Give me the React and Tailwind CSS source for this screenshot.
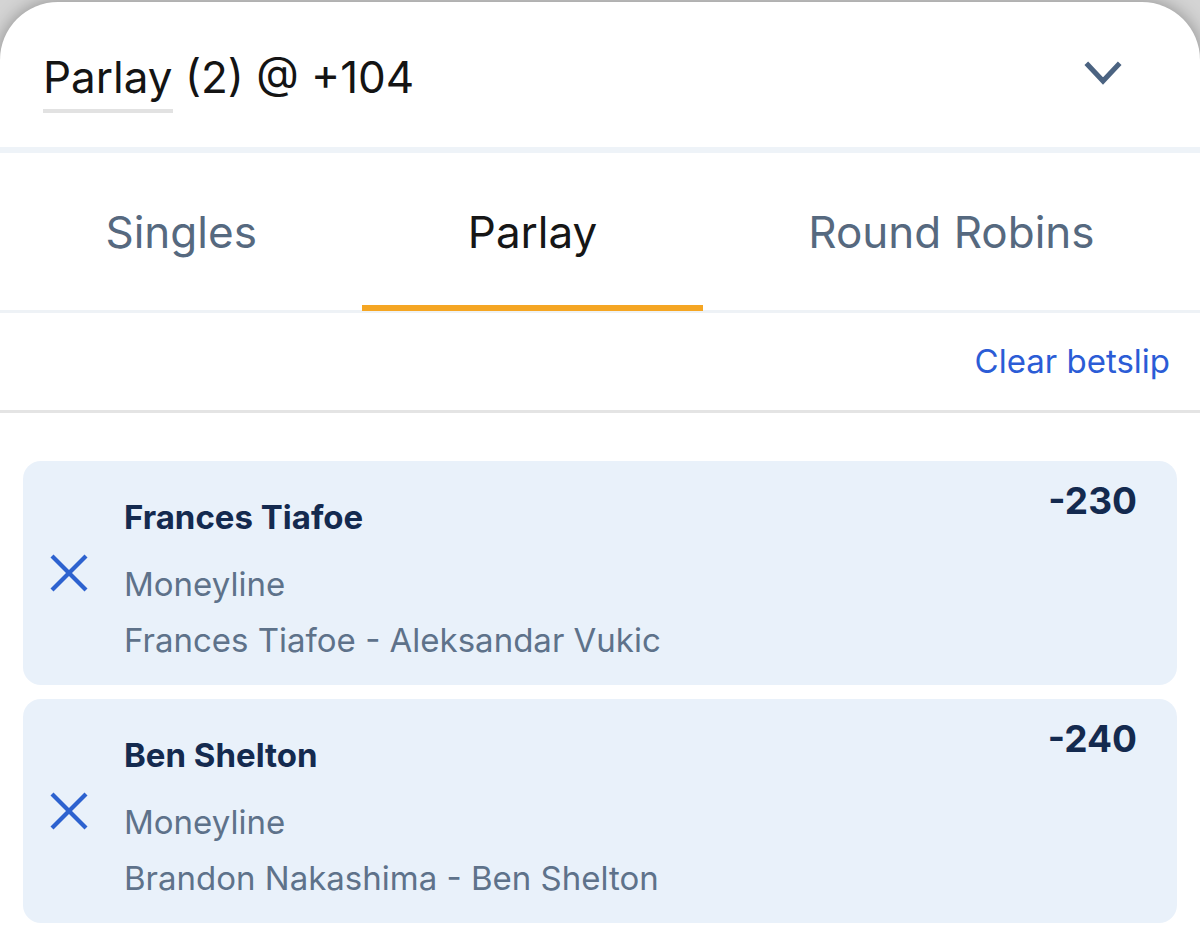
import React from "react";

function Chevron() {
  return (
    <svg width="42" height="32" viewBox="0 0 42 32" fill="none">
      <polyline points="6,6 21,22 36,6" stroke="#4b6381" strokeWidth="5" strokeLinecap="square" strokeLinejoin="miter" />
    </svg>
  );
}

function XIcon() {
  return (
    <svg width="40" height="40" viewBox="0 0 40 40" fill="none">
      <line x1="3" y1="3" x2="37" y2="37" stroke="#2d62cf" strokeWidth="4.2" />
      <line x1="37" y1="3" x2="3" y2="37" stroke="#2d62cf" strokeWidth="4.2" />
    </svg>
  );
}

function Leg({ name, market, match, odds }) {
  return (
    <div className="flex h-[224px] rounded-[18px] bg-[#e9f1fa]">
      <div className="flex w-[101px] shrink-0 items-center pl-[26px]">
        <XIcon />
      </div>
      <div className="flex flex-1 flex-col pt-[36px]">
        <div className="text-[33px] font-bold leading-[40px] text-[#142a4f]">{name}</div>
        <div className="mt-[27px] text-[33px] leading-[40px] text-[#5e728a]">{market}</div>
        <div className="mt-[16px] text-[33px] leading-[40px] text-[#5e728a]">{match}</div>
      </div>
      <div className="pr-[40px] pt-[18px] text-[37px] font-bold leading-[44px] text-[#142a4f]">{odds}</div>
    </div>
  );
}

export default function App() {
  return (
    <div
      className="min-h-[932px] w-[1200px] overflow-hidden bg-[#d4d4d4] pt-[2px]"
      style={{ fontFamily: "Inter, 'Noto Sans', sans-serif" }}
    >
      <div className="min-h-[930px] rounded-t-[58px] bg-white shadow-[0_0_18px_rgba(0,0,0,0.35)]">
        {/* header */}
        <div className="flex h-[145px] items-center justify-between pl-[43px] pr-[76px]">
          <div className="relative mt-[4px] text-[44px] leading-[56px] text-[#141414]">
            <span className="relative inline-block">
              Parlay
              <span className="absolute left-0 right-0 top-[60px] h-[4px] bg-[#e2e2e2]"></span>
            </span>{" "}
            (2) @ +104
          </div>
          <Chevron />
        </div>
        <div className="h-[6px] bg-[#eef3f8]"></div>

        {/* tabs */}
        <div className="flex h-[160px] border-b-[3px] border-[#eef2f6]">
          <div className="flex flex-auto items-center justify-center text-[44px] text-[#56697f]">Singles</div>
          <div className="relative flex flex-auto items-center justify-center text-[44px] text-[#161616]">
            Parlay
            <span className="absolute bottom-[-1px] left-0 right-0 h-[6px] bg-[#f5a623]"></span>
          </div>
          <div className="flex flex-auto items-center justify-center text-[44px] text-[#56697f]">Round Robins</div>
        </div>

        {/* clear */}
        <div className="flex h-[100px] items-center justify-end border-b-[3px] border-[#e4e4e4] pr-[30px]">
          <span className="text-[33px] text-[#2b5cd6]">Clear betslip</span>
        </div>

        {/* legs */}
        <div className="flex flex-col gap-[14px] px-[23px] pt-[48px]">
          <Leg
            name="Frances Tiafoe"
            market="Moneyline"
            match="Frances Tiafoe - Aleksandar Vukic"
            odds="-230"
          />
          <Leg
            name="Ben Shelton"
            market="Moneyline"
            match="Brandon Nakashima - Ben Shelton"
            odds="-240"
          />
        </div>
      </div>
    </div>
  );
}
